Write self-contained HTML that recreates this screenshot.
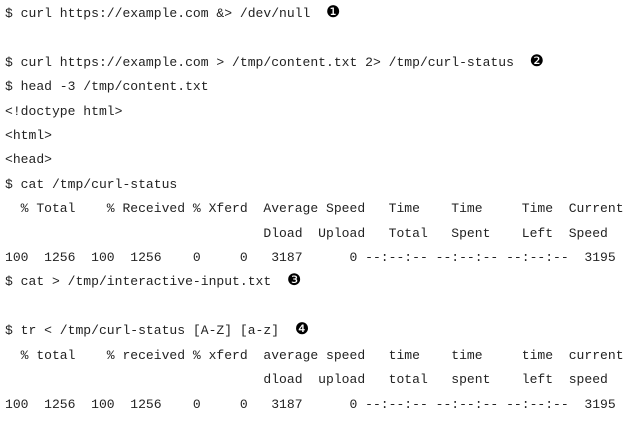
<!DOCTYPE html>
<html><head><meta charset="utf-8"><style>
html,body{margin:0;padding:0;background:#fff;width:631px;height:421px;overflow:hidden}
pre{margin:0;padding:2px 0 0 5px;font-family:"Liberation Mono","DejaVu Sans Mono",monospace;font-size:13.05px;line-height:24.4px;color:#222}
.c{font-family:"DejaVu Sans",sans-serif;font-size:16px;line-height:10px;color:#000}
</style></head><body><pre>$ curl https://example.com &amp;&gt; /dev/null  <span class="c">❶</span>

$ curl https://example.com &gt; /tmp/content.txt 2&gt; /tmp/curl-status  <span class="c">❷</span>
$ head -3 /tmp/content.txt
&lt;!doctype html&gt;
&lt;html&gt;
&lt;head&gt;
$ cat /tmp/curl-status
  % Total    % Received % Xferd  Average Speed   Time    Time     Time  Current
                                 Dload  Upload   Total   Spent    Left  Speed
100  1256  100  1256    0     0   3187      0 --:--:-- --:--:-- --:--:--  3195
$ cat &gt; /tmp/interactive-input.txt  <span class="c">❸</span>

$ tr &lt; /tmp/curl-status [A-Z] [a-z]  <span class="c">❹</span>
  % total    % received % xferd  average speed   time    time     time  current
                                 dload  upload   total   spent    left  speed
100  1256  100  1256    0     0   3187      0 --:--:-- --:--:-- --:--:--  3195
</pre></body></html>
